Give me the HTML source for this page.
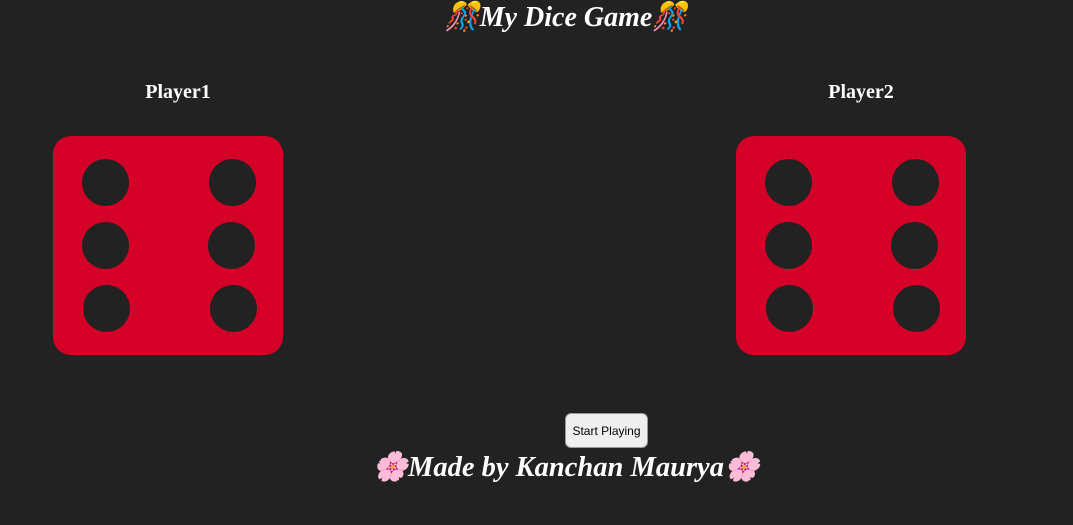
<!DOCTYPE html>
<html><head><style>
body{margin:0;width:1073px;height:525px;background:#222;overflow:hidden;position:relative;font-family:"Liberation Serif",serif;color:#fff}
.t{position:absolute;left:58px;width:1016px;text-align:center;font-style:italic;font-weight:bold;font-size:28px;white-space:nowrap}
.p{position:absolute;font-weight:bold;font-size:20px;width:200px;text-align:center;top:81px}
.d{position:absolute;top:136px;width:230px;height:219px;background:#d50027;border-radius:18px}
.d i{position:absolute;width:47px;height:47px;border-radius:50%;background:#222}
.b{position:absolute;left:565px;top:413px;width:83px;height:35px;box-sizing:border-box;background:#efefef;border:1px solid #999;border-radius:6px;color:#000;font:12px "Liberation Sans",sans-serif;text-align:center;line-height:35px}
</style></head><body>
<div class="t" style="top:0px">🎊My Dice Game🎊</div>
<div class="p" style="left:78px">Player1</div>
<div class="p" style="left:761px">Player2</div>
<div class="d" style="left:53px">
<i style="left:29px;top:23px"></i><i style="left:156px;top:23px"></i>
<i style="left:29px;top:86px"></i><i style="left:155px;top:86px"></i>
<i style="left:30px;top:149px"></i><i style="left:157px;top:149px"></i>
</div>
<div class="d" style="left:736px">
<i style="left:29px;top:23px"></i><i style="left:156px;top:23px"></i>
<i style="left:29px;top:86px"></i><i style="left:155px;top:86px"></i>
<i style="left:30px;top:149px"></i><i style="left:157px;top:149px"></i>
</div>
<div class="b">Start Playing</div>
<div class="t" style="top:450px;font-size:28.5px">🌸Made by Kanchan Maurya🌸</div>
</body></html>
